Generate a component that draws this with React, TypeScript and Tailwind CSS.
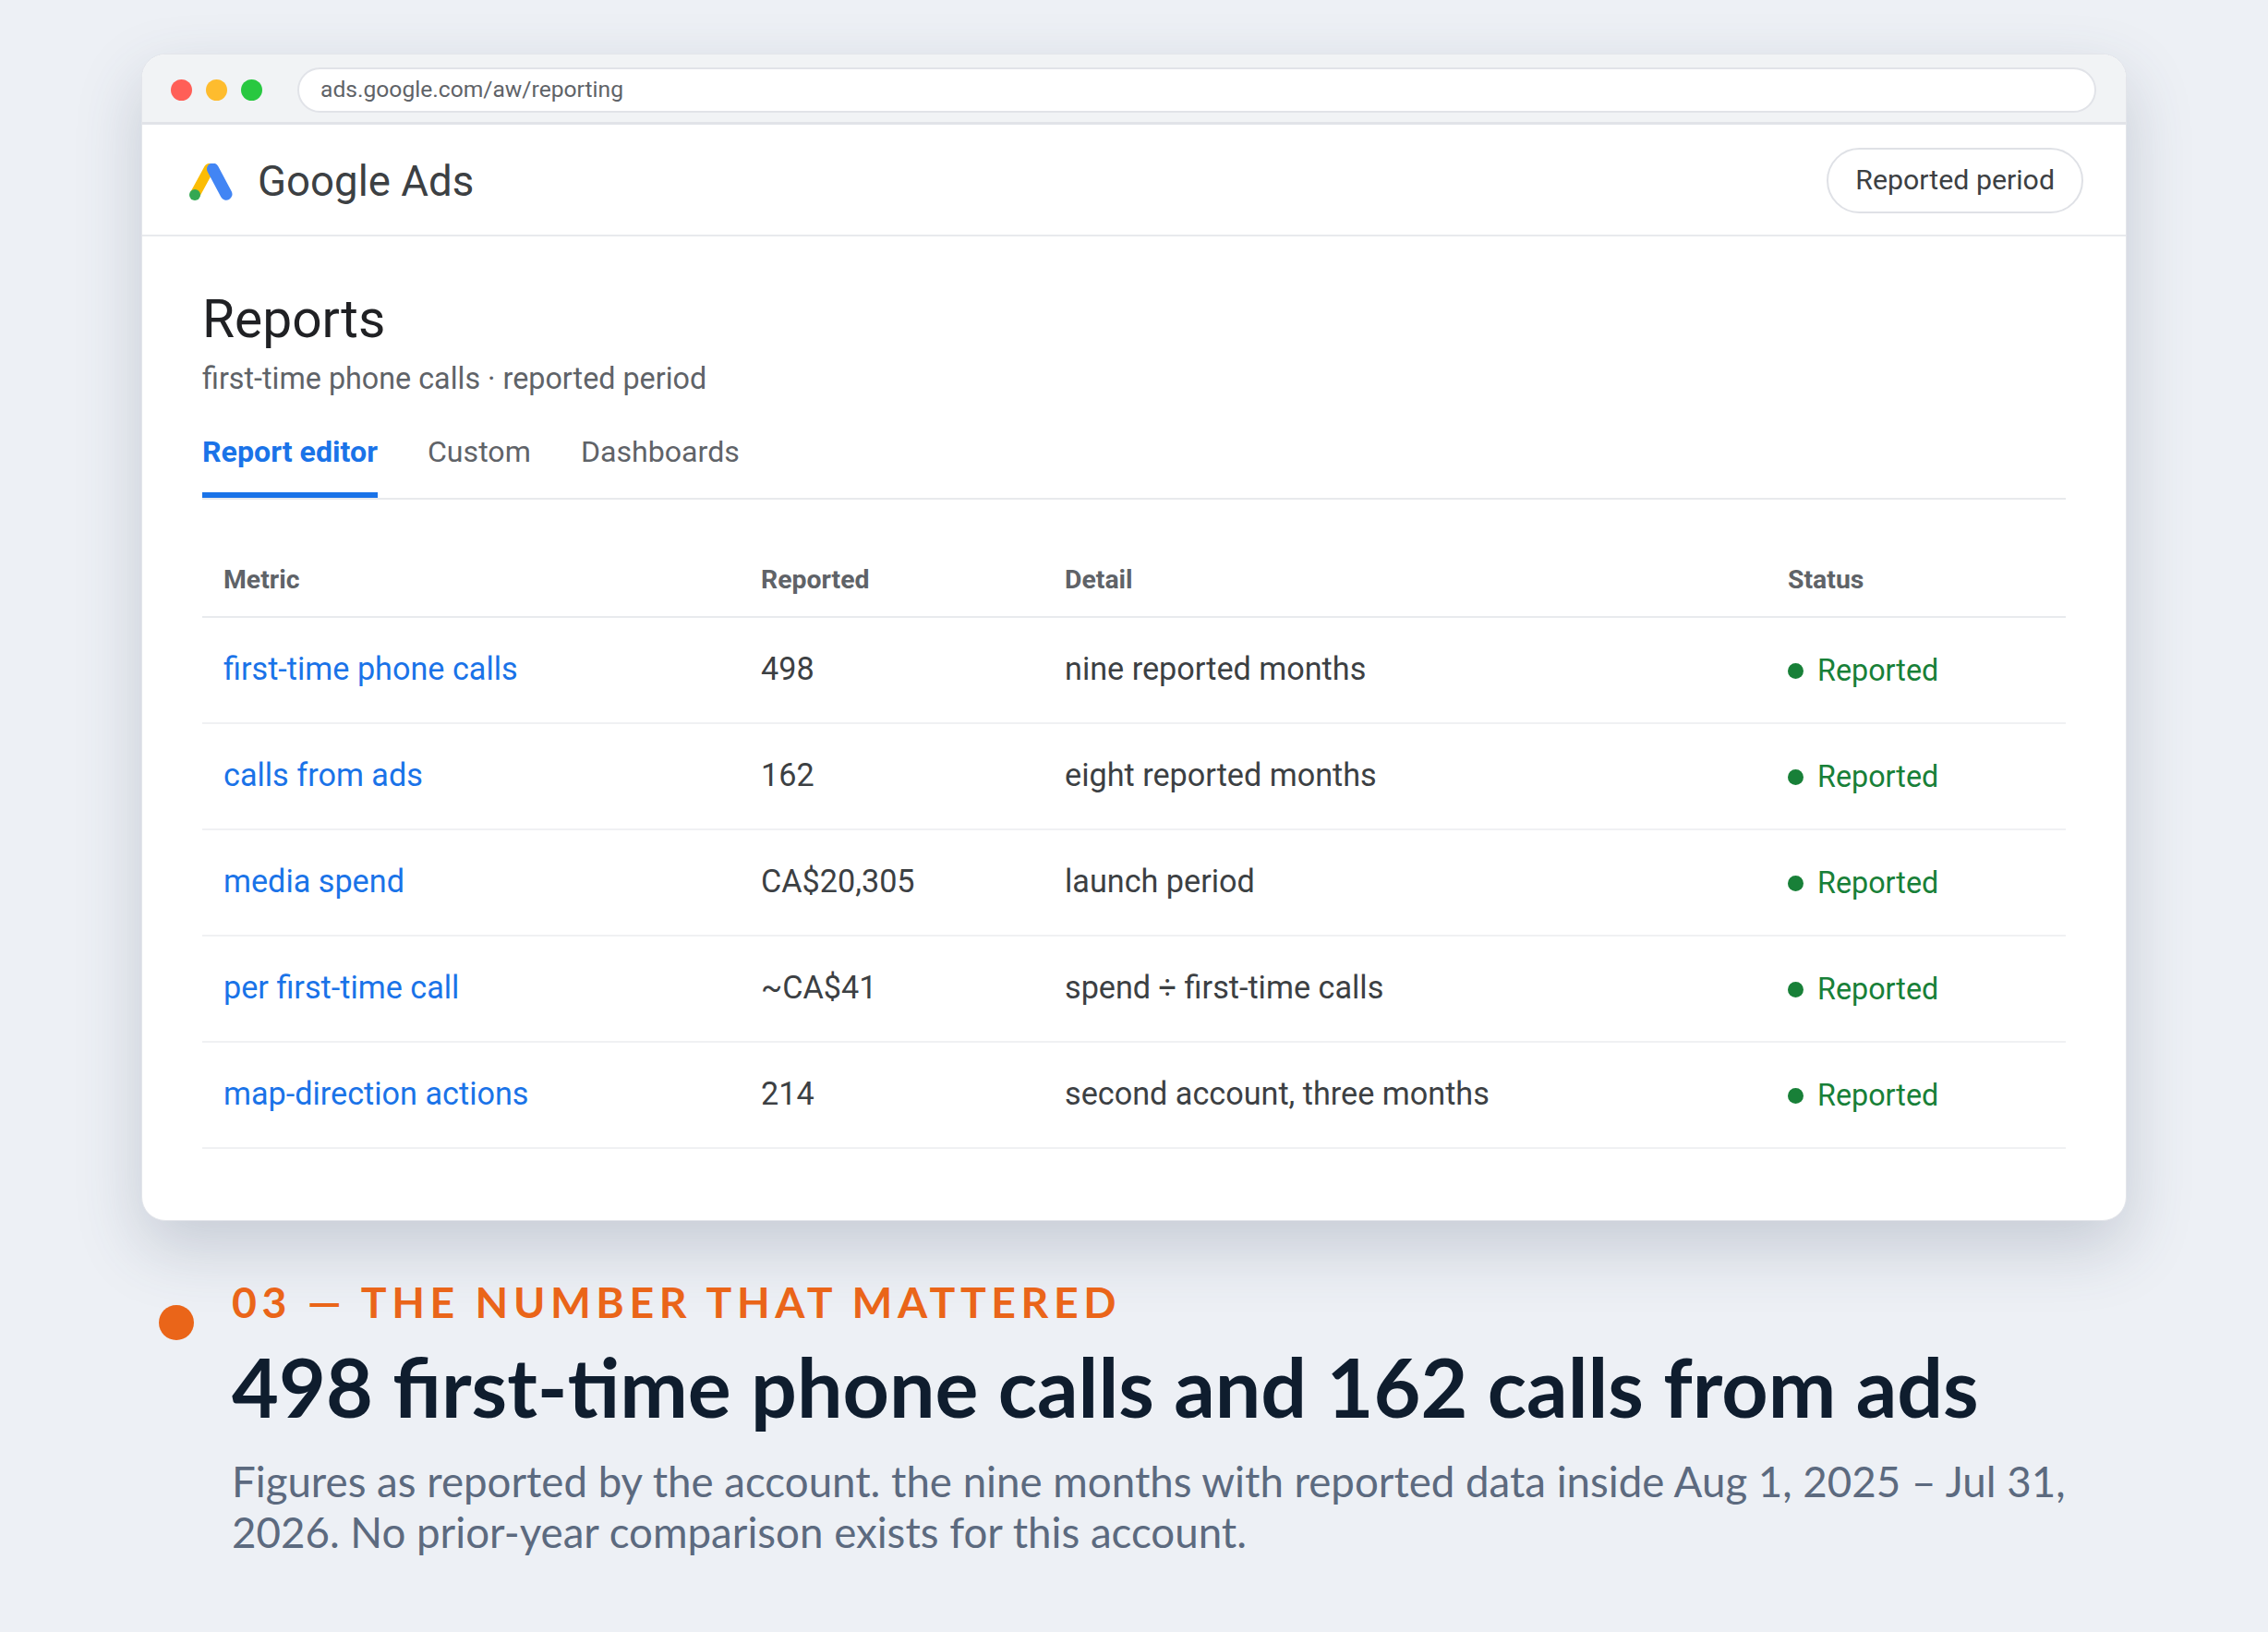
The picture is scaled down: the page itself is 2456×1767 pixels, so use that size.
const rows = [
  { metric: "first-time phone calls", value: "498", detail: "nine reported months" },
  { metric: "calls from ads", value: "162", detail: "eight reported months" },
  { metric: "media spend", value: "CA$20,305", detail: "launch period" },
  { metric: "per first-time call", value: "~CA$41", detail: "spend ÷ first-time calls" },
  { metric: "map-direction actions", value: "214", detail: "second account, three months" },
]

const Logo = () => (
  <svg width="47" height="40" viewBox="0 0 47 40" fill="none">
    <path d="M6.500 33 L21.500 5.500" stroke="#fbbc04" strokeWidth="11" strokeLinecap="round" />
    <path d="M25.500 6 L40 33.200" stroke="#4285f4" strokeWidth="13" strokeLinecap="round" />
    <circle cx="6" cy="34" r="6" fill="#34a853" />
  </svg>
)

const Row = ({ metric, value, detail }) => (
  <div className="grid grid-cols-[581px_329px_783px_325px] h-[115px] pb-[2px] items-center border-b-2 border-[#f0f1f3] text-[34.2px] text-[#3c4043]">
    <div className="pl-[23px] text-[#1a73e8]">{metric}</div>
    <div className="px-6">{value}</div>
    <div className="px-6">{detail}</div>
    <div className="px-6 flex items-center gap-[15px] text-[#188038] text-[32.3px] pt-[3px]">
      <span className="w-[17px] h-[17px] rounded-full bg-[#188038]" />
      Reported
    </div>
  </div>
)

export default function App() {
  return (
    <div className="w-[2456px] h-[1767px] bg-[#edf0f5] pt-[58px] pl-[153px] overflow-hidden font-['Roboto',sans-serif]">
      <div className="w-[2150px] h-[1264px] bg-white rounded-[26px] border border-[#e3e5ea] overflow-hidden shadow-[0_28px_70px_rgba(60,72,100,0.22)]">
        <div className="h-[76px] pt-[3px] bg-[#f1f3f5] border-b-[3px] border-[#e1e3e8] flex items-center pl-[31px] pr-[32px]">
          <div className="flex gap-[15px]">
            <span className="w-[23px] h-[23px] rounded-full bg-[#ff5f57]" />
            <span className="w-[23px] h-[23px] rounded-full bg-[#febc2e]" />
            <span className="w-[23px] h-[23px] rounded-full bg-[#28c840]" />
          </div>
          <div className="ml-[38px] flex-1 h-[49px] rounded-full bg-white border-2 border-[#e1e3e8] flex items-center pl-[23px] text-[24.64px] text-[#5f6368]">
            ads.google.com/aw/reporting
          </div>
        </div>
        <div className="h-[121px] pt-[1px] border-b-2 border-[#e8eaed] flex items-center justify-between pl-[51px] pr-[46px]">
          <div className="flex items-center gap-[27px] pt-[4px]">
            <Logo />
            <span className="text-[45.6px] text-[#3c4043]">Google Ads</span>
          </div>
          <div className="h-[71px] px-[29px] rounded-full border-2 border-[#dfe1e6] flex items-center text-[30.3px] text-[#3c4043]">
            Reported period
          </div>
        </div>
        <div className="px-[65px]">
          <h1 className="text-[56.9px] leading-[72px] pt-[54px] text-[#202124]">Reports</h1>
          <p className="text-[32.3px] leading-[44px] mt-[6px] text-[#5f6368]">first-time phone calls · reported period</p>
          <div className="flex gap-[54px] mt-[31px] border-b-2 border-[#e8eaed] text-[32.15px] text-[#5f6368]">
            <div className="h-[76px] pt-[4px] border-b-[6px] border-[#1a73e8] font-bold text-[#1a73e8] leading-[44px]">Report editor</div>
            <div className="h-[76px] pt-[4px] leading-[44px]">Custom</div>
            <div className="h-[76px] pt-[4px] leading-[44px]">Dashboards</div>
          </div>
          <div className="mt-[66px]">
            <div className="grid grid-cols-[581px_329px_783px_325px] h-[62px] items-start border-b-2 border-[#e8eaed] text-[28.4px] font-bold text-[#5f6368] leading-[42px]">
              <div className="pl-[23px]">Metric</div>
              <div className="px-6">Reported</div>
              <div className="px-6">Detail</div>
              <div className="px-6">Status</div>
            </div>
            {rows.map((r) => (
              <Row key={r.metric} {...r} />
            ))}
          </div>
        </div>
      </div>
      <div className="flex mt-[59px] font-['Lato',sans-serif]">
        <span className="w-[38px] h-[38px] rounded-full bg-[#ea6519] ml-[19px] mt-[32px]" />
        <div className="ml-[41px] w-[2030px]">
          <div className="text-[46.4px] leading-[56px] font-bold tracking-[0.12em] text-[#ea6519]">03 — THE NUMBER THAT MATTERED</div>
          <h2 className="text-[87.85px] leading-[104px] font-bold text-[#0f1d2e] mt-[12px]">498 first-time phone calls and 162 calls from ads</h2>
          <p className="text-[45.65px] leading-[55px] text-[#5c6a7f] mt-[23px]">
            Figures as reported by the account. the nine months with reported data inside Aug 1, 2025 – Jul 31, 2026. No prior-year comparison exists for this account.
          </p>
        </div>
      </div>
    </div>
  )
}
